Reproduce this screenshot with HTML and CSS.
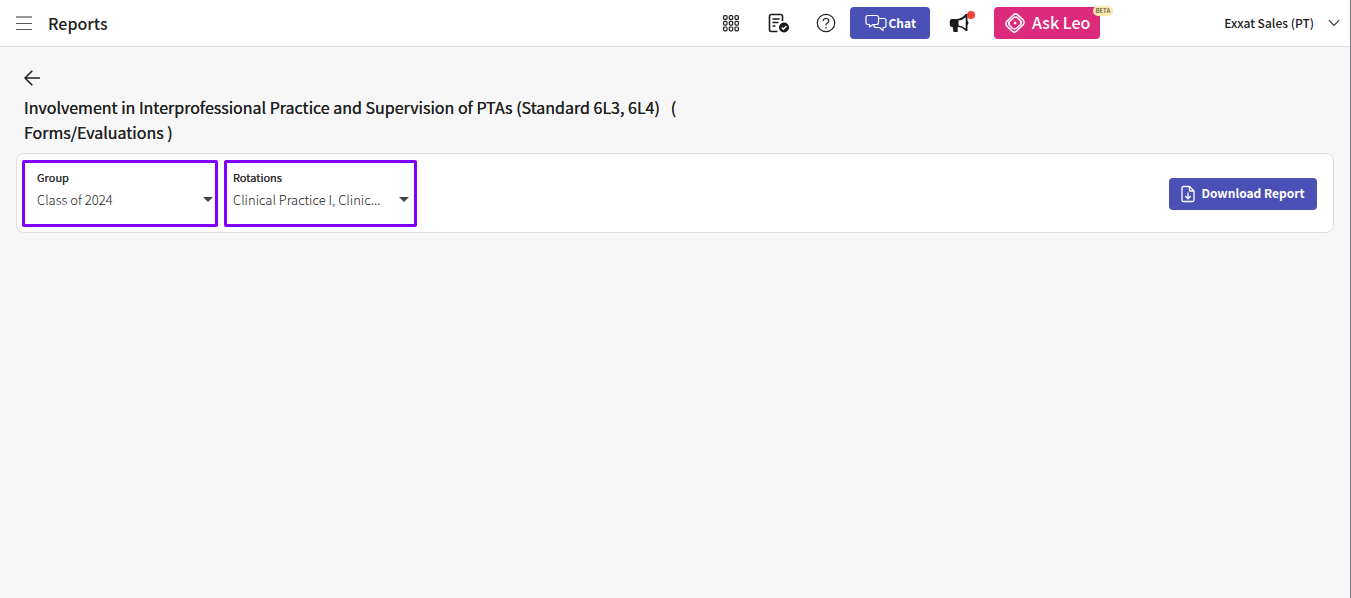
FILE: index.html
```html
<!DOCTYPE html>
<html lang="en">
<head>
<meta charset="utf-8">
<meta name="viewport" content="width=device-width, initial-scale=1">
<title>Reports</title>
<link rel="stylesheet" href="styles.css">
</head>
<body>
<header class="topbar">
  <button class="icon-btn menu-btn" aria-label="Menu">
    <svg width="16" height="14" viewBox="0 0 16 14" stroke="#555" fill="none"><path d="M0 1h16" stroke="#999" stroke-width="2"/><path d="M0 7.500h16M0 13.500h16"/></svg>
  </button>
  <h1 class="app-title">Reports</h1>
  <div class="tools">
    <button class="icon-btn" aria-label="Apps">
      <svg width="18" height="18" viewBox="0 0 18 18" fill="none" stroke="#222" stroke-width="1.200"><g id="r"><rect x="1.600" y="1.600" width="3.400" height="3.800" rx="1"/><rect x="7.300" y="1.600" width="3.400" height="3.800" rx="1"/><rect x="13" y="1.600" width="3.400" height="3.800" rx="1"/></g><use href="#r" y="5.700"/><use href="#r" y="11.400"/></svg>
    </button>
    <button class="icon-btn tasks-btn" aria-label="Tasks">
      <svg width="22" height="20" viewBox="0 0 22 20" fill="none" stroke="#1c1c1c"><path d="M9.500 18.500H3.200Q1.500 18.500 1.500 16.800V3.200Q1.500 1.500 3.200 1.500h9.600q1.700 0 1.700 1.700V8" stroke-width="1.600"/><path d="M4.500 6h7M4.500 9.500h6M4.500 13h3" stroke-width="1.500"/><circle cx="16" cy="14.500" r="5" fill="#1c1c1c" stroke="none"/><path d="m13.700 14.500 1.700 1.700 3-3.200" stroke="#fff" stroke-width="1.300"/></svg>
    </button>
    <button class="icon-btn" aria-label="Help">
      <svg width="20" height="20" viewBox="0 0 20 20" fill="none" stroke="#222" stroke-width="1.200"><circle cx="10" cy="10" r="8.700"/><path d="M7.200 7.900Q7.200 5.500 10 5.500t2.800 2.300q0 1.300-1.400 2.100T10 12v.6" /><circle cx="10" cy="14.700" r=".8" fill="#222" stroke="none"/></svg>
    </button>
    <button class="btn chat-btn">
      <svg width="22" height="18" viewBox="0 0 22 18" fill="none" stroke="#fff" stroke-width="1.200" stroke-linejoin="round"><path d="M3 1.500h8.500q2 0 2 2v5q0 2-2 2H8L4.500 13v-2.500H3q-2 0-2-2v-5q0-2 2-2z"/><path d="M13.500 4.500H19q2 0 2 2v5q0 2-2 2h-1v3l-3.500-3H11q-2 0-2-2v-1"/></svg>
      <span>Chat</span>
    </button>
    <button class="icon-btn news-btn" aria-label="Announcements">
      <svg width="20" height="20" viewBox="0 0 20 20"><path fill="#1c1c1c" fill-rule="evenodd" d="M18.500 1v7q1 .5 1 2t-1 2v6h-1.800q-3.500-3.800-8-4v5H4.500l-.8-5H3q-2.200 0-2.200-2V8Q.8 6 3 6h5q5-.3 8.700-5zM9.500 7.600v4.800q4 .3 7.200 3V4.200Q13.500 7.200 9.500 7.600z"/></svg>
      <span class="dot"></span>
    </button>
    <button class="btn leo-btn">
      <svg width="22" height="22" viewBox="0 0 22 22" fill="none" stroke="#fff" stroke-width="1.500" stroke-linejoin="round" stroke-linecap="round"><g id="l"><path d="M5.300 16.500 3 14.200Q1 12 2.600 9.600L9.300 3q2-2 4.200-.4l3.200 3"/><path d="M5 12.500Q4.400 10.800 5.800 9.300L9.200 6q2.200-1.800 4.600 0l2.400 2.500q1.100 1.300 1 2.700"/></g><use href="#l" transform="rotate(180 11 11)"/><circle cx="11" cy="11" r="1.400" fill="#fff" stroke="none"/></svg>
      <span>Ask Leo</span>
      <span class="beta">BETA</span>
    </button>
    <button class="account">
      <span>Exxat Sales (PT)</span>
      <svg width="12" height="8" viewBox="0 0 12 8" fill="none" stroke="#333" stroke-width="1.100"><path d="m.8 1.200 5.200 5.200 5.200-5.200"/></svg>
    </button>
  </div>
</header>
<main class="content">
  <button class="icon-btn back" aria-label="Back">
    <svg width="16" height="16" viewBox="0 0 16 16" fill="none" stroke="#222" stroke-width="1.600" stroke-linecap="round" stroke-linejoin="round"><path d="M15.300 8H1M7.800 1.200 1 8l6.800 6.800"/></svg>
  </button>
  <h2 class="report-title">Involvement in Interprofessional Practice and Supervision of PTAs (Standard 6L3, 6L4) &nbsp; ( Forms/Evaluations )</h2>
  <section class="card">
    <div class="field group">
      <label for="group">Group</label>
      <select id="group"><option>Class of 2024</option></select>
      <svg class="caret" width="10" height="5" viewBox="0 0 10 5"><path d="M0 0h10L5 5z" fill="#444"/></svg>
    </div>
    <div class="field rotations">
      <label for="rotations">Rotations</label>
      <select id="rotations"><option>Clinical Practice I, Clinic...</option></select>
      <svg class="caret" width="10" height="5" viewBox="0 0 10 5"><path d="M0 0h10L5 5z" fill="#444"/></svg>
    </div>
    <button class="btn download">
      <svg width="14" height="18" viewBox="0 0 14 18" fill="none" stroke="#fff" stroke-width="1.300" stroke-linejoin="round"><path d="M2.500 1.500h6L13 6v9q0 1.500-1.500 1.500h-9Q1 16.500 1 15V3q0-1.500 1.500-1.500z"/><path d="M8.500 1.500V6H13M7 7.500v6M4.300 11 7 13.700 9.700 11"/></svg>
      <span>Download Report</span>
    </button>
  </section>
</main>
</body>
</html>
```
FILE: styles.css
```css
* { box-sizing: border-box; }
body {
  margin: 0;
  min-height: 100vh;
  background: #f7f7f7;
  border-right: 1px solid #77777b;
  color: #212121;
  font-family: "Noto Sans CJK SC", "Noto Sans", sans-serif;
  font-size: 12px;
}
button, select { font: inherit; color: inherit; }
button { border: 0; background: none; padding: 0; cursor: pointer; }
svg { display: block; flex: none; }
.topbar {
  display: flex;
  align-items: center;
  height: 47px;
  padding: 0 10px 0 16px;
  background: #fff;
  border-bottom: 1px solid #dedede;
}
.icon-btn { display: flex; align-items: center; }
.app-title {
  margin: 0 0 0 16px;
  font-size: 16px;
  line-height: 24px;
  font-weight: 500;
}
.tools { display: flex; align-items: center; margin-left: auto; }
.tools .icon-btn { margin-right: 28px; }
.tools .tasks-btn { margin-right: 26px; }
.tools .icon-btn + .btn { margin-left: -14px; }
.btn {
  display: flex;
  align-items: center;
  justify-content: center;
  height: 32px;
  border-radius: 4px;
  background: #4a50b5;
  color: #fff;
  font-weight: 700;
}
.btn span, .account span { padding-bottom: 2px; }
.chat-btn { width: 80px; gap: 2px; margin-right: 19px; }
.tools .news-btn { position: relative; margin-right: 39px; }
.dot {
  position: absolute;
  top: -2px;
  right: -6px;
  width: 8px;
  height: 8px;
  border-radius: 50%;
  background: #f04438;
}
.leo-btn {
  position: relative;
  width: 106px;
  gap: 6px;
  background: #dc2a7c;
  font-size: 16px;
  font-weight: 500;
}
.btn .beta {
  position: absolute;
  top: -1px;
  right: -13px;
  padding: 0 3px;
  border-radius: 5px;
  background: #fbe9ae;
  color: #55503c;
  font-size: 6px;
  line-height: 10px;
  font-weight: 500;
}
.account {
  display: flex;
  align-items: center;
  gap: 14px;
  margin-left: 124px;
  font-weight: 500;
}
.content { padding: 23px 16px; }
.back { margin-left: 8px; }
.report-title {
  max-width: 680px;
  margin: 9px 0 8px 8px;
  font-size: 16px;
  line-height: 25px;
  font-weight: 400;
  text-shadow: 0 0 0 #212121;
}
.card {
  display: flex;
  align-items: center;
  gap: 6px;
  padding: 6px 16px 5px 5px;
  background: #fff;
  border: 1px solid #dfdfdf;
  border-radius: 8px;
}
.field {
  position: relative;
  padding: 5px 6px 12px;
  border: 3px solid #7f00ff;
  border-radius: 2px;
}
.group { width: 196px; padding-left: 12px; }
.rotations { width: 193px; }
.field label {
  display: block;
  font-size: 11px;
  line-height: 18px;
  color: #333;
  text-shadow: 0 0 0 #333;
}
.field select {
  display: block;
  width: 100%;
  height: 26px;
  padding: 0;
  border: 0;
  background: transparent;
  appearance: none;
  color: #222;
  font-size: 13px;
  font-weight: 300;
}
.caret { position: absolute; right: 2px; top: 34px; pointer-events: none; }
.rotations .caret { right: 5px; }
.download { width: 148px; gap: 6px; margin-left: auto; }
```
